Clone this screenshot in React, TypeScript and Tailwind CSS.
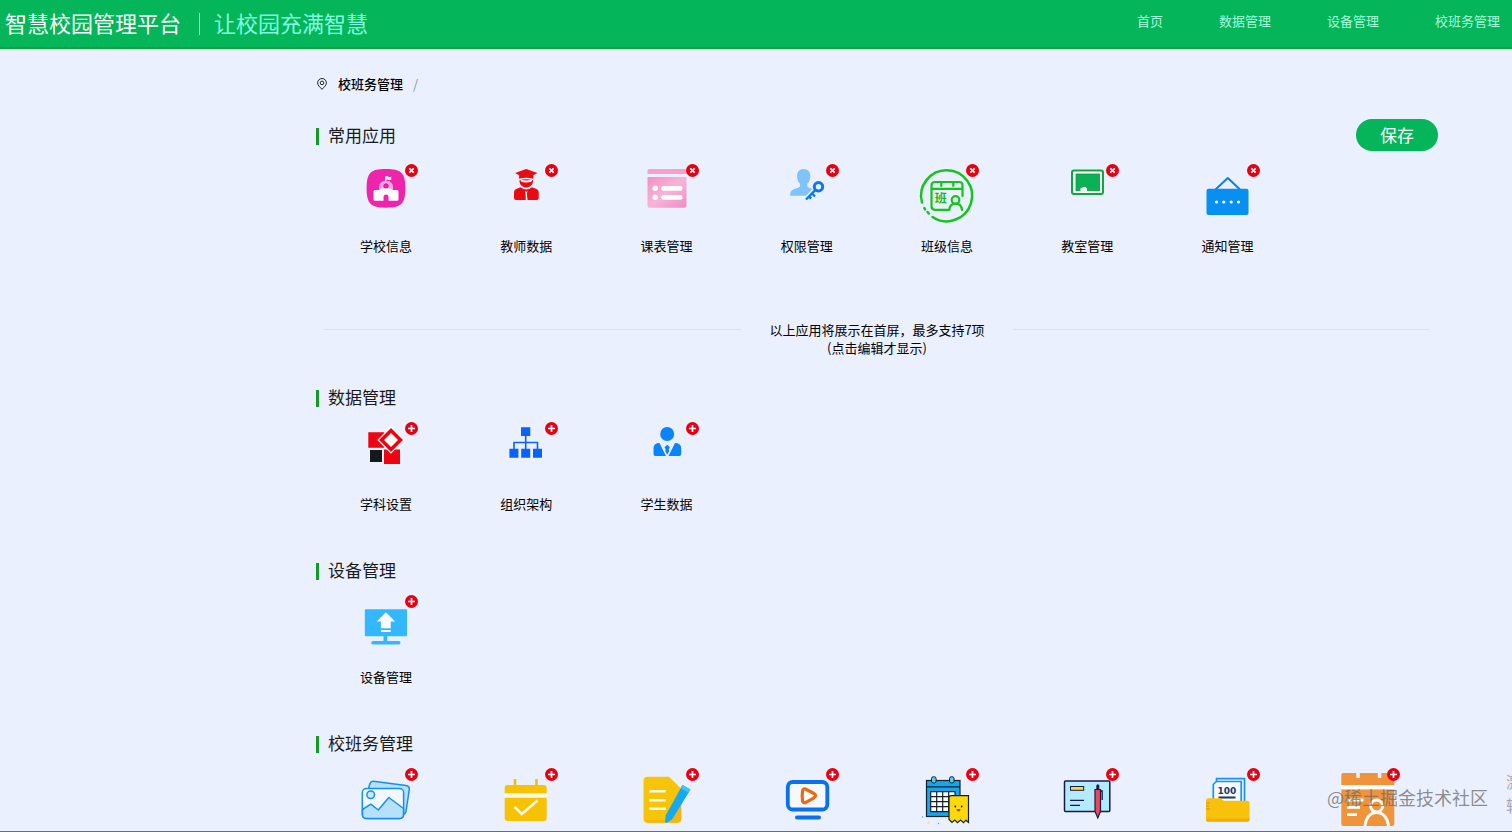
import { useState, type ReactNode } from 'react'

type App = {
	name?: string
	icon: ReactNode
}

const navItems = ['首页', '数据管理', '设备管理', '校班务管理']

const commonApps: App[] = [
	{ name: '学校信息', icon: <SchoolIcon /> },
	{ name: '教师数据', icon: <TeacherIcon /> },
	{ name: '课表管理', icon: <TimetableIcon /> },
	{ name: '权限管理', icon: <PermissionIcon /> },
	{ name: '班级信息', icon: <ClassIcon /> },
	{ name: '教室管理', icon: <RoomIcon /> },
	{ name: '通知管理', icon: <NoticeIcon /> },
]

const dataApps: App[] = [
	{ name: '学科设置', icon: <SubjectIcon /> },
	{ name: '组织架构', icon: <OrgIcon /> },
	{ name: '学生数据', icon: <StudentIcon /> },
]

const deviceApps: App[] = [{ name: '设备管理', icon: <DeviceIcon /> }]

const affairApps: App[] = [
	{ icon: <AlbumIcon /> },
	{ icon: <CheckInIcon /> },
	{ icon: <HomeworkIcon /> },
	{ icon: <VideoIcon /> },
	{ icon: <DutyIcon /> },
	{ icon: <CardIcon /> },
	{ icon: <ScoreIcon /> },
	{ icon: <VisitIcon /> },
]

export default function App() {
	const [saving, setSaving] = useState(false)

	return (
		<div className="relative flex h-screen flex-col overflow-hidden border-b border-[#1f9d3f] bg-[#ebf0fe] font-['Noto_Sans_CJK_SC',sans-serif] text-black">
			<header className="flex h-[49px] shrink-0 items-center justify-between border-b-2 border-[#0aa53c] bg-[#04b559] pr-3 pl-[5px]">
				<div className="flex items-center pb-1 text-[22px] leading-8">
					<h1 className="text-white">智慧校园管理平台</h1>
					<span className="mt-1 mr-3.5 ml-4.5 h-[22px] w-px bg-[#c5f5da]" />
					<p className="text-[#82fbe0]">让校园充满智慧</p>
				</div>
				<nav className="flex gap-14 pb-1.5 text-[13px] leading-5 text-[#a8fbdc]">
					{navItems.map((item) => (
						<a key={item} href="#">
							{item}
						</a>
					))}
				</nav>
			</header>

			<main className="min-h-0 flex-1 overflow-hidden pt-[25px] pr-[74px] pl-79">
				<div className="flex h-5 items-center text-[13px]">
					<svg viewBox="0 0 12 12" className="mr-2.5 h-3 w-3" fill="none" stroke="#222" strokeWidth="1">
						<path d="M6 11.3C3.4 8.900 1.600 7 1.600 4.900a4.400 4.400 0 0 1 8.800 0C10.400 7 8.600 8.900 6 11.300Z" />
						<circle cx="6" cy="4.900" r="1.800" />
					</svg>
					<a href="#" className="font-medium">
						校班务管理
					</a>
					<span className="ml-2.5 text-[#8f94a3]">/</span>
				</div>

				<section className="mt-[25px]">
					<div className="mb-[9px] flex items-center justify-between">
						<SectionTitle title="常用应用" />
						<button
							type="button"
							onClick={() => setSaving(true)}
							disabled={saving}
							className="h-8 w-[82px] rounded-full bg-[#04b559] text-[17px] leading-6 text-white">
							保存
						</button>
					</div>
					<AppGrid apps={commonApps} action="remove" />
				</section>

				<div className="mt-[65px] mb-7 flex items-start gap-7 px-2 text-center text-[13px] leading-[18px]">
					<span className="mt-2 h-px flex-1 bg-[#dde0ee]" />
					<p>
						以上应用将展示在首屏，最多支持7项
						<br />
						(点击编辑才显示)
					</p>
					<span className="mt-2 h-px flex-1 bg-[#dde0ee]" />
				</div>

				<div className="flex flex-col gap-11">
					<Section title="数据管理" apps={dataApps} />
					<Section title="设备管理" apps={deviceApps} />
					<Section title="校班务管理" apps={affairApps} />
				</div>
			</main>

			<p className="absolute right-6 bottom-[22px] text-[18px] leading-6 text-[#6b6b6b]/75">@稀土掘金技术社区</p>
			<p className="absolute right-0 bottom-3.5 w-1.5 overflow-hidden text-[16px] leading-6 text-[#a5a8b0]">
				激
				<br />转
			</p>
		</div>
	)
}

function Section({ title, apps }: { title: string; apps: App[] }) {
	return (
		<section>
			<div className="mb-[9px]">
				<SectionTitle title={title} />
			</div>
			<AppGrid apps={apps} action="add" />
		</section>
	)
}

function SectionTitle({ title }: { title: string }) {
	return (
		<h2 className="flex items-center gap-[9px] text-[17px] leading-6 text-[#1a1a1a]">
			<span className="mt-0.5 h-[17px] w-[3px] bg-[#149a26]" />
			{title}
		</h2>
	)
}

function AppGrid({ apps, action }: { apps: App[]; action: 'add' | 'remove' }) {
	return (
		<ul className="grid grid-cols-8">
			{apps.map((app, i) => (
				<li key={i} className="flex flex-col items-center gap-1.5">
					<div className="relative h-[70px] w-[60px]">
						{app.icon}
						<button
							type="button"
							aria-label={action === 'add' ? '添加' : '移除'}
							className="absolute top-1 -right-0.5 h-[13px] w-[13px] rounded-full bg-[#e60012]">
							<svg viewBox="0 0 13 13" className="h-[13px] w-[13px]" stroke="#fff" strokeWidth="1.700">
								{action === 'add' ? (
									<path d="M6.500 3v7M3 6.500h7" />
								) : (
									<path d="m4.300 4.300 4.400 4.400M8.700 4.300 4.300 8.700" />
								)}
							</svg>
						</button>
					</div>
					{app.name && <span className="text-[13px] leading-5">{app.name}</span>}
				</li>
			))}
		</ul>
	)
}

function Icon({ children }: { children: ReactNode }) {
	return (
		<svg viewBox="0 0 60 70" className="h-[70px] w-[60px]" fill="none" aria-hidden="true">
			{children}
		</svg>
	)
}

function SchoolIcon() {
	return (
		<Icon>
			<path d="M30 9c15.500 0 19.300 4 19.300 19.300S45.500 47.700 30 47.700 10.600 43.700 10.600 28.300 14.500 9 30 9Z" fill="#ee24ac" />
			<path d="M23 30v-3.500a7 6 0 0 1 14 0V30Z" fill="#f9a3dc" />
			<circle cx="30" cy="26" r="2.200" fill="#ee24ac" stroke="#d414a0" strokeWidth="1" />
			<path d="M29 22.500V16.500q2-1 3.200 0t3 0v3.300q-1.800.8-3 0t-2.200 0v2.700Z" fill="#fff" />
			<path d="M19 30h4.500l2-1.500h9l2 1.500H41q1.500 0 1.500 1.500v8q0 1.300-1.500 1.300h-8.500V37a2.500 2.500 0 0 0-5 0v3.800H19q-1.500 0-1.500-1.300v-8Q17.500 30 19 30Z" fill="#fff" />
		</Icon>
	)
}

function TeacherIcon() {
	return (
		<Icon>
			<g fill="#ea0a12">
				<path d="m30.200 9 11.300 4-4.200 2.200v3.600q-7-2.300-14.200 0v-3.600l-4-2.200Z" />
				<path d="M23.500 20.200q6.700-2 13.500 0v1.300c-.3 3.500-3.500 6-6.800 6s-6.400-2.500-6.700-6Z" />
				<path d="M24.500 27.300q5.700 4.500 11.500 0l4.500 1.600q2.200.8 2.200 3V38q0 2-2 2H20q-2 0-2-2v-6.100q0-2.200 2.200-3Z" />
			</g>
			<path d="M24 19.200q6.200 2.700 12.500 0l-1.200 2.600q-5 1.600-10 0Z" fill="#fff" />
			<path d="m29 31 1.200 1 1.300-1-.6 2.500.6 6.500h-1.700l-.2-6.500Z" fill="#fff" />
		</Icon>
	)
}

function TimetableIcon() {
	return (
		<Icon>
			<defs>
				<linearGradient id="timetable" x1="0" y1="0" x2="1" y2="1">
					<stop offset="0" stopColor="#f48fc0" />
					<stop offset=".5" stopColor="#f9b3d8" />
					<stop offset="1" stopColor="#f08cc4" />
				</linearGradient>
			</defs>
			<path d="M10.500 14v-3q0-2 2-2h35q2 0 2 2v3Z" fill="#f7a0ca" />
			<path d="M10.500 17h39v28.700q0 2-2 2h-35q-2 0-2-2Z" fill="url(#timetable)" />
			<g fill="#fff">
				<circle cx="18.200" cy="28.300" r="2.700" />
				<circle cx="18.200" cy="37.300" r="2.700" />
				<rect x="24.200" y="26" width="21.300" height="4.700" rx="2.300" />
				<rect x="24.200" y="35" width="21.300" height="4.700" rx="2.300" />
			</g>
		</Icon>
	)
}

function PermissionIcon() {
	return (
		<Icon>
			<path
				d="M26.700 9c4.300 0 6.900 3 6.600 7.500-.2 3.500-1.300 5.800-3 7.300v2.500c.5 1.200 2.500 1.700 5 2.700L29 35.800H13c.2-4 1.500-5.500 4.500-6.700 3-1.200 5-1.700 5.600-2.900v-2.400c-1.700-1.500-2.800-3.800-3-7.300C19.800 12 22.400 9 26.700 9Z"
				fill="#7ec3fb"
			/>
			<circle cx="41.500" cy="26.800" r="4.200" stroke="#0b78f2" strokeWidth="3" />
			<path d="M38.500 29.800 29 39.500M35 33.500l3 3M32 36.500l2.200 2" stroke="#0b78f2" strokeWidth="2.400" />
		</Icon>
	)
}

function ClassIcon() {
	return (
		<Icon>
			<g stroke="#13c51b" strokeWidth="2.500" strokeLinecap="round">
				<path d="M5 42.500A25.500 25.500 0 1 1 15.500 57" />
				<path d="m7.300 48 .8 1.500M10.500 52l1.300 1.500" />
				<path d="M31.500 49.800H18q-3.500 0-3.500-3.500V25.500q0-3.500 3.500-3.500h24q3.500 0 3.500 3.500V36" strokeWidth="2.200" />
				<path d="M15 28.800h30M24.300 22v4M36.300 22v4" strokeWidth="2.200" />
				<circle cx="38.500" cy="40" r="3.800" strokeWidth="2.200" />
				<path d="M32.300 50c.4-4 2.500-6.300 6.200-6.300s6.100 2.300 6.500 6.300" strokeWidth="2.200" />
			</g>
			<text x="23.800" y="43.300" textAnchor="middle" fontSize="12" fontWeight="700" fill="#13b81b">
				班
			</text>
		</Icon>
	)
}

function RoomIcon() {
	return (
		<Icon>
			<rect x="15" y="10.500" width="31" height="23.500" rx="2" stroke="#0ca73f" strokeWidth="2" fill="#fff" />
			<rect x="19" y="14" width="23.500" height="16.700" fill="#0cb056" stroke="#0a9b3c" strokeWidth=".8" />
			<path d="M23.500 31v-2.800h2v-1.300h3.500v1.300h1V31Z" fill="#fff" />
		</Icon>
	)
}

function NoticeIcon() {
	return (
		<Icon>
			<path d="M17.500 29.500 29.800 18l12.200 11.500" stroke="#0a7fe8" strokeWidth="2" strokeLinejoin="round" />
			<rect x="8.500" y="28.700" width="42" height="26.300" rx="2" fill="#078ff2" />
			<g fill="#fff">
				<circle cx="18.500" cy="42" r="1.600" />
				<circle cx="25.800" cy="42" r="1.600" />
				<circle cx="33.200" cy="42" r="1.600" />
				<circle cx="40.500" cy="42" r="1.600" />
			</g>
		</Icon>
	)
}

function SubjectIcon() {
	return (
		<Icon>
			<path d="M12.300 14.300h16v15.400h-16ZM28 31.500h16V46H28Z" fill="#ee0410" />
			<path d="M14 32h12v12H14Z" fill="#16191c" />
			<path d="M35 8.300 48.700 22 35 35.700 21.300 22Z" fill="#fff" />
			<path d="M35 10 47 22 35 34 23 22Z" fill="#ee0410" />
			<path d="m35 15 7 7-7 7-7-7Z" fill="#fff" />
		</Icon>
	)
}

function OrgIcon() {
	return (
		<Icon>
			<path d="M25 9.300h9.300V18H25ZM13.400 30.700h9v9h-9ZM25.200 30.700h9v9h-9ZM37 30.700h9v9h-9Z" fill="#0a63f2" />
			<path d="M29.700 18v13M18 31v-6.500h23.500V31" stroke="#0a63f2" strokeWidth="1.600" />
		</Icon>
	)
}

function StudentIcon() {
	return (
		<Icon>
			<g fill="#0a84fb">
				<circle cx="30.200" cy="16" r="7" />
				<path d="m22.500 25 6.500 13H18.500q-2 0-2-2v-5.500q0-5.500 6-5.500ZM38 25l-6.500 13H42.200q2 0 2-2v-5.500q0-5.500-6.200-5.500Z" />
				<path d="m30.200 26.700 2.700 2.500-1.200 2.300.5 1.500-2 3.800-2-3.800.5-1.500-1.200-2.300Z" />
			</g>
		</Icon>
	)
}

function DeviceIcon() {
	return (
		<Icon>
			<rect x="8.800" y="18.300" width="42.200" height="27" rx="1" fill="#33b8fd" />
			<path d="M27.500 45h3.800v5H43q1.500 0 1.500 1.800T43 53.600H16.800q-1.500 0-1.500-1.800t1.500-1.800h10.700Z" fill="#33b8fd" />
			<path d="m29.900 21.300 9.200 9.200h-4.400v6.800h-9.800v-6.800h-4.200ZM24.900 39h9.800v2h-9.800Z" fill="#fff" />
		</Icon>
	)
}

function AlbumIcon() {
	return (
		<Icon>
			<g stroke="#1590e8" strokeWidth="1.500" strokeLinejoin="round">
				<path d="M12.500 24.500 14 19.500q.8-2.500 3.500-2.200L50 21.500q3.700.6 3.300 4L50 47.500q-.4 2.500-2.700 2.800" fill="#b6e0fb" />
				<rect x="6.300" y="24.500" width="41.300" height="30" rx="4" fill="#f3f8ff" />
				<path d="m6.500 45.500 8.300-5.300 7.500 5.800 10.500-12.500L47.500 44.500V50.500q0 4-4 4H10.500q-4 0-4-4Z" fill="#b6e0fb" />
				<circle cx="14.700" cy="30.800" r="3.800" fill="#cde9fc" />
			</g>
		</Icon>
	)
}

function CheckInIcon() {
	return (
		<Icon>
			<path d="M8.700 29.500v-5.500q0-3 3-3h36q3 0 3 3v5.500ZM8.700 33.500h42V54q0 3-3 3h-36q-3 0-3-3Z" fill="#f6c203" />
			<path d="M8.700 29.500h42v4h-42Z" fill="#fffbe0" />
			<path d="M19 15v7M40.500 15v7" stroke="#f0bd18" strokeWidth="2.600" />
			<path d="m18.500 42.700 7.300 7.200L41.500 36.500" stroke="#fffbe0" strokeWidth="2.600" />
		</Icon>
	)
}

function HomeworkIcon() {
	return (
		<Icon>
			<path d="M10.500 12.700H32l12.200 12v30q0 4-4 4H10.500q-4 0-4-4v-38q0-4 4-4Z" fill="#f6c40a" />
			<path d="M8 56q1 2.700 3.500 2.700h28.700q4 0 4-4V38L32 56Z" fill="#f5b510" />
			<path d="M12.500 27.300h16.300M12.500 36.300h16.300M12.500 44.700h16.300" stroke="#fffbe0" strokeWidth="2.600" />
			<path d="m45.500 21 8 4.500-18.500 30-5.500 3.500-1.500-1 .8-6.800Z" fill="#14a9f3" />
			<path d="m45.500 21 8 4.500-2 3.300-8-4.700Z" fill="#3cc4fb" />
		</Icon>
	)
}

function VideoIcon() {
	return (
		<Icon>
			<rect x="10.800" y="18" width="39.500" height="27.500" rx="5" stroke="#0a70ee" strokeWidth="3.800" fill="#f5f9ff" />
			<path d="M20 53.500h22" stroke="#0a70ee" strokeWidth="4" strokeLinecap="round" />
			<path d="M25.500 27q.5-2.700 3-2l8.500 4.500q3 2 0 4.300l-8.500 4.800q-2.500.7-3-2-.6-4.800 0-9.600Z" stroke="#ec6a0c" strokeWidth="3.200" />
		</Icon>
	)
}

function DutyIcon() {
	return (
		<Icon>
			<rect x="9.500" y="16.500" width="33.500" height="36" fill="#19a5ea" stroke="#14202c" strokeWidth="1.200" />
			<path d="M9.500 22.800H43" stroke="#14202c" strokeWidth="1.200" />
			<rect x="13.700" y="27.700" width="24.300" height="20" fill="#fff" />
			<path
				d="M13.700 27.700H38v20H13.700ZM19.700 27.700v20M25.700 27.700v20M31.700 27.700v20M13.700 32.700H38M13.700 37.700H38M13.700 42.700H38"
				stroke="#14202c"
				strokeWidth="1.200"
			/>
			<rect x="14.500" y="12.700" width="4.600" height="6.300" rx="2" fill="#4fd0e8" stroke="#14202c" />
			<rect x="32.500" y="12.700" width="4.600" height="6.300" rx="2" fill="#4fd0e8" stroke="#14202c" />
			<path
				d="M34 31.700h17.500V58.500l-2.500-2.300-2.500 2.500-3-2.700-3 2.700-2.700-2.700-2.800 2.500-3-3V34q0-2.300 2-2.300Z"
				fill="#fbd90a"
				stroke="#14202c"
				strokeWidth="1.200"
			/>
			<circle cx="38.300" cy="42.500" r=".9" fill="#14202c" />
			<circle cx="44.700" cy="42.500" r=".9" fill="#14202c" />
			<path d="M39.500 45h4q0 2.500-2 2.500t-2-2.500Z" fill="#e0342c" />
			<circle cx="5.500" cy="53" r=".7" fill="#3aa8e8" />
			<circle cx="11.500" cy="58.500" r="1.200" fill="#f6e27a" />
			<circle cx="21.500" cy="59.500" r=".7" fill="#3aa8e8" />
		</Icon>
	)
}

function CardIcon() {
	return (
		<Icon>
			<rect x="7.500" y="17" width="45.300" height="30.500" rx="1" fill="#b3eafc" stroke="#1c1a45" strokeWidth="1.500" />
			<rect x="13.500" y="22.500" width="13.200" height="3.800" fill="#f5d94a" stroke="#1c1a45" />
			<path d="M13 36.300h14M13 41.300h10" stroke="#1c1a45" strokeWidth="1.200" />
			<path d="M43 27h2.200v9" stroke="#1c1a45" strokeWidth="1.300" />
			<path d="M38 25.500h5.500v22L40.800 54 38 47.500Z" fill="#e8475c" stroke="#1c1a45" strokeWidth="1.200" />
			<path d="M39.300 25v-3.500l1.500-1.500 1.500 1.500V25Z" fill="#1c1a45" />
		</Icon>
	)
}

function ScoreIcon() {
	return (
		<Icon>
			<path d="M18.500 17v-2.300h28V40" stroke="#1794ee" strokeWidth="1.700" />
			<path d="M15.300 40V20.500l3-3h24.900V40Z" fill="#f6fbff" stroke="#1794ee" strokeWidth="1.700" />
			<text x="29" y="30" textAnchor="middle" fontSize="9" fontWeight="700" fill="#173a5e" fontFamily="DejaVu Sans">
				100
			</text>
			<path d="M20.500 33.500h17" stroke="#173a5e" strokeWidth="2" />
			<path d="M10 34.300h12l4 2.500h23.500q2 0 2 2v17q0 2-2 2H10q-2 0-2-2v-19.500q0-2 2-2Z" fill="#f8c20c" />
			<path d="M8 54.500h43.500v1.300q0 2-2 2H10q-2 0-2-2Z" fill="#f0b000" />
			<path d="M8 39h4M8 42h3M8 45h4" stroke="#c78f10" strokeWidth=".8" />
		</Icon>
	)
}

function VisitIcon() {
	return (
		<Icon>
			<path d="M5.300 9h13v5h3.500V9h18v5h3.500V9h11q2 0 2 2v10.300h-53V11q0-2 2-2ZM3.300 25.300h53V60q0 2-2 2h-49q-2 0-2-2Z" fill="#f0943c" />
			<path d="M3.300 21.300h53v4h-53Z" fill="#fff" />
			<g stroke="#fff" strokeWidth="2.800">
				<path d="M9 36h16.500M9 43.300h13M9 50.700h10" />
				<circle cx="38.600" cy="42" r="6" />
				<path d="M27 62c.7-8 5-13.500 11.600-13.500S49.700 54 50.500 62" />
			</g>
		</Icon>
	)
}
